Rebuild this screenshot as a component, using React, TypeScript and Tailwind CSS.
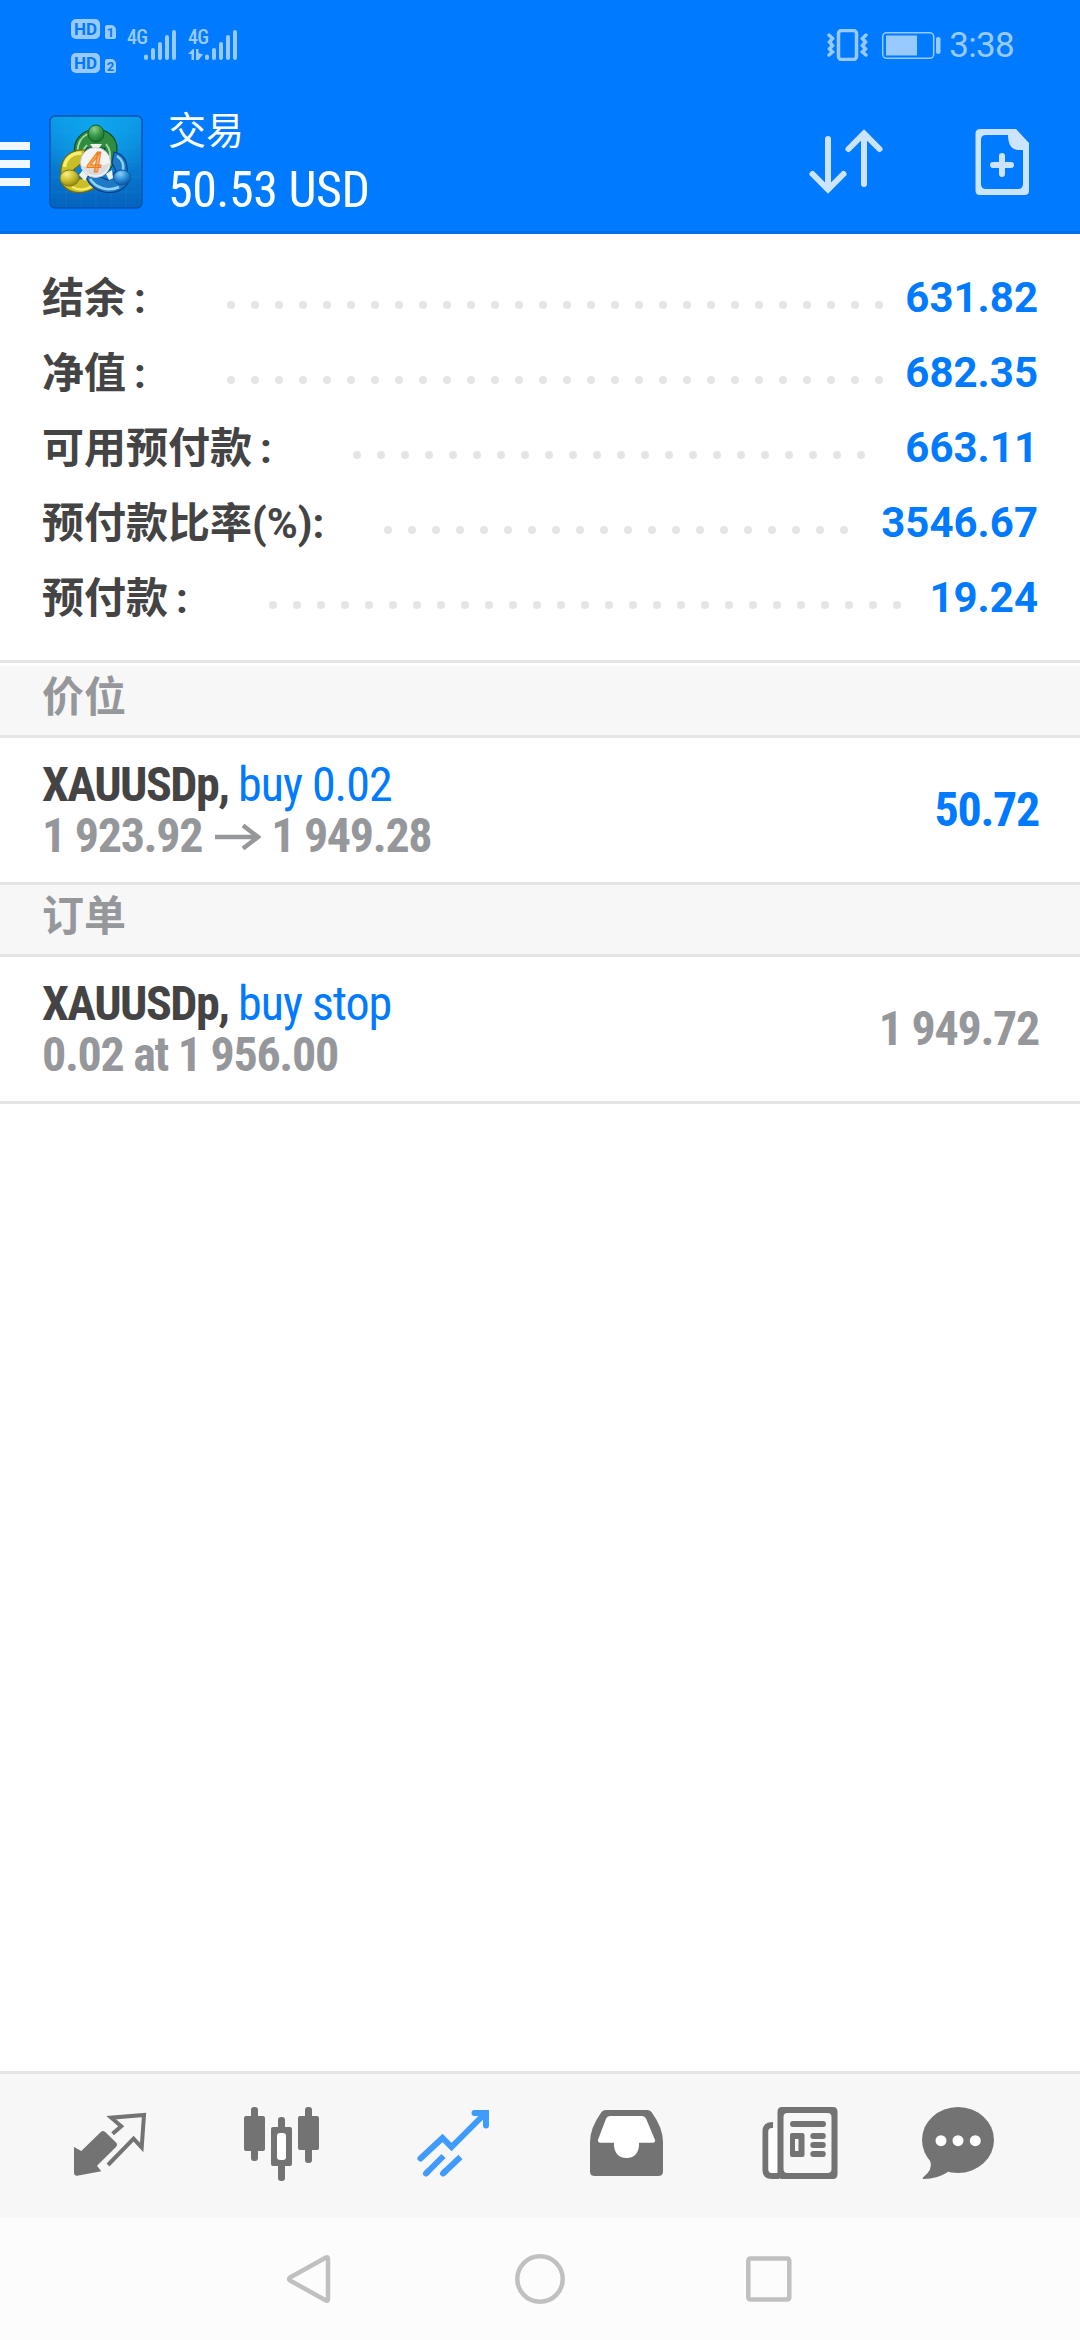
import React from 'react';

interface Balance {
  label: string;
  wide?: boolean;
  value: string;
  dots: number;
}

const balances: Balance[] = [
  { label: '结余', wide: true, value: '631.82', dots: 28 },
  { label: '净值', wide: true, value: '682.35', dots: 28 },
  { label: '可用预付款', wide: true, value: '663.11', dots: 22 },
  { label: '预付款比率(%)', value: '3546.67', dots: 20 },
  { label: '预付款', wide: true, value: '19.24', dots: 27 },
];

const condensed = "font-['Roboto_Condensed','Roboto','Noto_Sans_CJK_SC',sans-serif] [font-stretch:75%]";

const HdBadge = ({ sim }: { sim: string }) => (
  <div className="flex h-5 items-end gap-[5px]">
    <span className="flex h-5 w-[29px] items-center justify-center rounded-[5px] bg-[#99caff] text-[17px] leading-none font-bold text-[#007aff]">HD</span>
    <span className="flex h-[14px] w-[11px] items-center justify-center rounded-[2px] rounded-tr-[5px] bg-[#99caff] text-[13px] leading-none font-bold text-[#007aff]">{sim}</span>
  </div>
);

const Signal = ({ data }: { data?: boolean }) => (
  <div className="flex h-[30px] w-[50px]">
    <div className="flex w-[17px] flex-col justify-between">
      <span className={`${condensed} text-[20px] leading-[14px] font-medium tracking-[-0.8px]`}>4G</span>
      {data && (
        <svg className="h-[11px] w-[16px]" viewBox="0 0 16 11" fill="#99caff">
          <path d="M0 5 5 0h1v11H3.500V5zM8 0h2.500v4L15 5.500 10.500 11H8z" />
        </svg>
      )}
    </div>
    <svg className="h-[30px] w-[33px]" viewBox="0 0 33 30" stroke="#99caff" strokeWidth="4" strokeLinecap="round">
      <path d="M2 26.500v1.500M9 20v8M16 14v14M23 7v21M30 2v26" />
    </svg>
  </div>
);

const StatusBar = () => (
  <div className="flex h-[92px] items-start justify-between pr-[66px] pl-[71px] text-[#99caff]">
    <div className="flex">
      <div className="mt-[19px] flex flex-col gap-[14px]">
        <HdBadge sim="1" />
        <HdBadge sim="2" />
      </div>
      <div className="mt-[30px] ml-[11px] flex gap-[11px]">
        <Signal />
        <Signal data />
      </div>
    </div>
    <div className="mt-[29px] flex">
      <svg className="h-8 w-[114px]" viewBox="0 0 114 32" fill="none" stroke="#99caff">
        <rect x="11.500" y="1.500" width="18" height="29" rx="3" strokeWidth="3.500" />
        <path d="M2 6l3.500 3.500L2.500 13l3 3.500-3 3.500 3 3L2 26M39 6l-3.500 3.500 3 3.500-3 3.500 3 3.500-3 3L39 26" strokeWidth="3.500" strokeLinecap="round" />
        <rect x="55.700" y="3.700" width="51" height="25.600" rx="4" strokeWidth="1.500" />
        <path d="M59 6.500h31v20H59z" fill="#99caff" stroke="none" />
        <rect x="109" y="8" width="4.500" height="17" rx="2" fill="#99caff" stroke="none" />
      </svg>
      <span className="ml-[8px] text-[35px] leading-[34px] tracking-[-0.7px] whitespace-nowrap">3:38</span>
    </div>
  </div>
);

const Logo = () => (
  <svg className="ml-[20px] h-[94px] w-[94px]" viewBox="0 0 94 94">
    <defs>
      <linearGradient id="tile" x1="0" y1="0" x2="0" y2="1">
        <stop offset="0" stopColor="#0b9ae8" />
        <stop offset="1" stopColor="#0562bd" />
      </linearGradient>
      <radialGradient id="glow" cx=".5" cy=".15" r=".6">
        <stop offset="0" stopColor="#0fa6ee" />
        <stop offset="1" stopColor="#0fa6ee" stopOpacity="0" />
      </radialGradient>
      <radialGradient id="green" cx=".4" cy=".25" r=".8">
        <stop offset="0" stopColor="#8fd08a" />
        <stop offset=".5" stopColor="#3a9a4a" />
        <stop offset="1" stopColor="#176b2c" />
      </radialGradient>
      <radialGradient id="yellow" cx=".35" cy=".25" r=".8">
        <stop offset="0" stopColor="#f7f08a" />
        <stop offset=".5" stopColor="#cfc22f" />
        <stop offset="1" stopColor="#8d8412" />
      </radialGradient>
      <radialGradient id="blue" cx=".4" cy=".25" r=".8">
        <stop offset="0" stopColor="#8fd0f5" />
        <stop offset=".5" stopColor="#2b8fd8" />
        <stop offset="1" stopColor="#0b4f9c" />
      </radialGradient>
    </defs>
    <rect x="1" y="1" width="92" height="92" rx="5" fill="url(#tile)" stroke="#0a56ae" strokeWidth="1.500" />
    <rect x="2" y="2" width="90" height="90" rx="4" fill="url(#glow)" />
    <path d="M17 2v90M32 2v90M47 2v90M62 2v90M77 2v90M2 17h90M2 32h90M2 47h90M2 62h90M2 77h90" stroke="#3fb4f5" strokeOpacity=".14" />
    {/* green figure */}
    <path d="M26 40C23 26 32 15 47 14c16 1 24 13 20 27-1 6-4 11-7 14l-8-5 4-17H38l-6 9z" fill="#2f8c40" stroke="#0f4f22" strokeWidth="1.200" />
    <path d="M28.500 37c0-9 4-15 10-18M38 30l-6 8M57 29c5 6 5 12 3 18" fill="none" stroke="#a5dba0" strokeWidth="1.800" />
    {/* yellow figure */}
    <path d="M36 35c-14-1-23 7-24 19v12c3 9 13 13 23 11 5-1 10-3 13-6l-6-9-12 2-7-8 10-8z" fill="#c9bd28" stroke="#6f6a10" strokeWidth="1.200" />
    <path d="M15.500 52c1-9 8-14 17-14" fill="none" stroke="#f6ee72" strokeWidth="3.500" />
    <path d="M23 72c7 4 15 3 20-1" fill="none" stroke="#f1e96a" strokeWidth="2.500" />
    {/* blue figure */}
    <path d="M65 37c9 2 14 9 13 21l2 8c-4 9-14 13-25 11-9-2-15-7-18-15l9-2 13 5 8-9-4-8z" fill="#1d78c6" stroke="#0a3f86" strokeWidth="1.200" />
    <path d="M41 64c6 9 18 13 29 8M68 41c6 4 7 9 6 15" fill="none" stroke="#8fd2f8" strokeWidth="2.500" />
    <path d="M41 29h12l-6 8zM30 60l4-5 5 5-3 6zM57 59l6-4 1 8-4 2z" fill="#eef5e6" />
    <ellipse cx="47" cy="18.500" rx="8" ry="8.500" fill="url(#green)" stroke="#125c2b" />
    <ellipse cx="20.500" cy="63" rx="9.500" ry="8" fill="url(#yellow)" stroke="#857b14" />
    <ellipse cx="73" cy="62.500" rx="8.500" ry="7.500" fill="url(#blue)" stroke="#0b5aa6" />
    <circle cx="46.500" cy="47.500" r="15" fill="#f4f4f6" stroke="#c9ccd2" />
    <path d="M32.500 51a14.500 14.500 0 0 0 28-3c-9 4-18 5-28 3z" fill="#dadbe0" />
    <text x="45.500" y="57" textAnchor="middle" fontSize="27" fontWeight="500" fontStyle="italic" fill="#f9b163" stroke="#ec7a1c" strokeWidth="1" className="font-['Roboto']">4</text>
  </svg>
);

const Header = () => (
  <div className="flex h-[139px] items-start">
    <div className="mt-[50px] flex w-[30px] flex-col gap-[10px]">
      <span className="h-2 bg-[#f0f7ff]" />
      <span className="h-2 bg-[#f0f7ff]" />
      <span className="h-2 bg-[#f0f7ff]" />
    </div>
    <div className="mt-[23px] -ml-px">
      <Logo />
    </div>
    <div className="ml-[25px] flex flex-1 flex-col text-white">
      <span className="mt-[11px] font-['Noto_Sans_CJK_SC',sans-serif] text-[38px] leading-[50px] font-normal">交易</span>
      <span className={`${condensed} mt-[7px] text-[50px] leading-[60px] tracking-[-0.5px]`}>50.53 USD</span>
    </div>
    <svg className="mt-[37px] mr-[50px] h-[68px] w-[222px]" viewBox="808 129 222 68" fill="none" stroke="#cce4ff" strokeWidth="6" strokeLinecap="round">
      <path d="M828 139v50M812.500 174l15.500 15.500 15.500-15.500M864 184v-50M848.500 149l15.500-15.500L879.500 149" />
      <path d="M980.500 129H1016l13 14v47.500q0 4.500-4.500 4.500h-44.500q-4.500 0-4.500-4.500v-57q0-4.500 5-4.500zM986 135q-5 0-5 5v44q0 5 5 5h32q5 0 5-5v-34h-5q-10-1-10-15z" fill="#cce4ff" fillRule="evenodd" stroke="none" />
      <path d="M1002 156v18M993 165h18" />
    </svg>
  </div>
);

const BalanceRow = ({ label, wide, value, dots }: Balance) => (
  <div className="flex h-[75px] items-center">
    <span className="pt-[2px] text-[42px] leading-[75px] font-bold whitespace-nowrap text-[#444444]">
      {label}
      <span className={wide ? 'mr-[23px] ml-[8px]' : 'mr-[2px]'}>:</span>
    </span>
    <div className="mt-[15px] ml-[58px] flex gap-4">
      {Array.from({ length: dots }, (_, i) => (
        <span key={i} className="h-2 w-2 rounded-full bg-[#e5e5e5]" />
      ))}
    </div>
    <span className="ml-auto text-[42px] leading-[75px] font-bold text-[#007aff]">{value}</span>
  </div>
);

const SectionTitle = ({ title }: { title: string }) => (
  <div className="h-[72px] border-b-[3px] border-[#e5e5e5] bg-[#f7f7f7] pl-[42px] text-[42px] leading-[64px] font-bold text-[#95979b]">
    {title}
  </div>
);

interface OrderProps {
  action: string;
  details: React.ReactNode;
  value: string;
  valueColor: string;
}

const OrderRow = ({ action, details, value, valueColor }: OrderProps) => (
  <div className={`${condensed} flex h-[147px] items-center justify-between border-b-[3px] border-[#e5e5e5] px-[42px] text-[48px] leading-[51px] font-bold`}>
    <div className="whitespace-nowrap">
      <div className="tracking-[-1.5px] text-[#444444]">
        XAUUSDp, <span className="font-normal tracking-[-1px] text-[#007aff]">{action}</span>
      </div>
      <div className="tracking-[-1.3px] text-[#95979b]">{details}</div>
    </div>
    <span className={`-mr-px mb-[2px] tracking-[-1.3px] ${valueColor}`}>{value}</span>
  </div>
);

const Arrow = () => (
  <svg className="mr-[10px] ml-[13px] inline-block h-[26px] w-[46px] align-[2px]" viewBox="0 0 46 26" fill="none" stroke="#95979b" strokeWidth="4.500">
    <path d="M0 13h43M28 1.500 43 13 28 24.500" />
  </svg>
);

const tabIcons = [
  <g key="quotes">
    <path d="M50 73l7.300 4 19.500-19q2.200-2 4.400 0L92 68.500q2 2.200 0 4.500L73 91.700l4.300 5.600-24.300 4.400q-3 0-3-3z" />
    <path d="M88.600 59.700l8.600-7.400-10-8.600L120 41l-2.300 32.500-8.100-8.800L84 91" fill="none" stroke="#737373" strokeWidth="4" />
  </g>,
  <g key="charts">
    <rect x="55" y="33" width="7" height="54" rx="3" />
    <rect x="48" y="42" width="21" height="35" rx="2" />
    <rect x="82" y="43" width="7" height="64" rx="3" />
    <rect x="75" y="53" width="21" height="39" rx="2" />
    <rect x="81" y="59" width="9" height="27" rx="3" fill="white" />
    <rect x="109" y="33" width="7" height="56" rx="3" />
    <rect x="102" y="42" width="21" height="34" rx="2" />
  </g>,
  <g key="trade" fill="none" stroke="#409bff" strokeWidth="6" strokeLinecap="round">
    <path d="M52.500 84.500l22-20.500 9 9 33-33M106.500 39h11.500v12.500" />
    <path d="M58 99.500l2-2M75 99.500l2-2" />
    <path d="M58 99.500l17.500-17.500M75 99.500l17.500-16.500" strokeLinecap="butt" />
  </g>,
  <g key="history">
    <path d="M66 36h41q3 0 4.500 2 11.500 16 11.500 30v29.500q0 4.500-5 4.500H55q-5 0-5-4.500V68q0-14 11.500-30 1.500-2 4.500-2z" />
    <path d="M70 42h32q3 0 4 2.500l9 21.500q.5 2.700-2.500 2.700H99V72q-1.500 12-12.500 12T74 72v-3.300H60.500q-3 0-2.500-3l8-21q1-2.700 4-2.700z" fill="white" />
  </g>,
  <g key="news">
    <path d="M70 33h51q4.500 0 4.500 5v62q0 5-4.500 5H70q-4.500 0-4.500-5V38q0-5 4.500-5zM75.500 39q-4 0-4 4v52q0 4 4 4h40q4 0 4-4V43q0-4-4-4z" fillRule="evenodd" />
    <path d="M61 51q-7.500 0-7.500 6v39q0 6 6.500 6h7" fill="none" stroke="#737373" strokeWidth="6" />
    <path d="M56.500 57q0-3 4.500-3h4v45h-5q-3.500 0-3.500-4z" fill="white" />
    <rect x="78" y="47" width="36" height="6" rx="3" />
    <path d="M80 59h10.500q2 0 2 2v20q0 2-2 2H80q-2 0-2-2V61q0-2 2-2zM83 65v12h3.500V65z" fillRule="evenodd" />
    <rect x="98.300" y="59" width="15.500" height="6" rx="3" />
    <rect x="98.300" y="68" width="15.500" height="6" rx="3" />
    <rect x="98.300" y="77" width="15.500" height="6" rx="3" />
  </g>,
  <g key="messages">
    <ellipse cx="74" cy="66" rx="36" ry="33" />
    <path d="M45 85q3 4 1 10.500-2 4-6.500 7.500-2 2 .5 2 13 0 24-7l-6-14z" />
    <g fill="white">
      <circle cx="57" cy="66.700" r="5.500" />
      <circle cx="74" cy="66.700" r="5.500" />
      <circle cx="91.300" cy="66.700" r="5.500" />
    </g>
  </g>,
];

const TabBar = () => (
  <div className="flex h-[147px] border-t-[3px] border-[#e5e5e5] bg-[#f7f7f7] px-6">
    {tabIcons.map((icon) => (
      <svg key={icon.key} className="h-[144px] w-[172px]" viewBox="0 0 172 144" fill="#737373">
        {icon}
      </svg>
    ))}
  </div>
);

const SystemNav = () => (
  <div className="flex h-[122px] items-center justify-center gap-[180px] bg-[#fcfcfc]">
    <svg className="h-[50px] w-[50px]" viewBox="0 0 50 50" fill="none" stroke="#c0c0c0" strokeWidth="4.500" strokeLinejoin="round">
      <path d="M41 3.500q2 -1 2 1.500v40q0 2.500-2 1.500L5 26.500q-2-1.500 0-3z" />
    </svg>
    <svg className="h-[50px] w-[50px]" viewBox="0 0 50 50" fill="none" stroke="#c0c0c0" strokeWidth="4.500">
      <circle cx="25" cy="25" r="22.700" />
    </svg>
    <svg className="h-[50px] w-[50px]" viewBox="0 0 50 50" fill="none" stroke="#c0c0c0" strokeWidth="4.500">
      <rect x="3.300" y="4.500" width="41" height="41" rx="2" />
    </svg>
  </div>
);

const App: React.FC = () => {
  return (
    <div className="flex h-[2340px] w-[1080px] flex-col bg-white font-['Roboto','Noto_Sans_CJK_SC',sans-serif]">
      <div className="h-[234px] border-b-[3px] border-[#006ee6] bg-[#007aff]">
        <StatusBar />
        <Header />
      </div>

      <div className="h-[432px] border-b-[3px] border-white">
        <div className="h-[429px] border-b-[3px] border-[#e5e5e5] px-[42px] pt-[26px]">
          {balances.map((item) => (
            <BalanceRow key={item.label} {...item} />
          ))}
        </div>
      </div>

      <SectionTitle title="价位" />
      <OrderRow
        action="buy 0.02"
        details={<>1 923.92<Arrow />1 949.28</>}
        value="50.72"
        valueColor="text-[#007aff]"
      />
      <SectionTitle title="订单" />
      <OrderRow action="buy stop" details="0.02 at 1 956.00" value="1 949.72" valueColor="text-[#95979b]" />

      <div className="flex-1" />
      <TabBar />
      <SystemNav />
    </div>
  );
};

export default App;
